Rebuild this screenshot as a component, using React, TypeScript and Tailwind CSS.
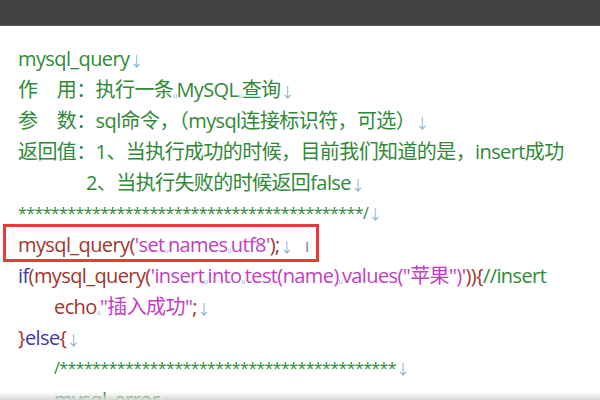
const G = "text-[#2f8a37]";
const R = "text-[#a3342c]";
const M = "text-[#c13ec4]";
const B = "text-[#3b3aa8]";
const Ar = () => <span className="text-[#8fb4dc] text-[14px] leading-none">↓</span>;
const Sp = () => <span className="text-[#8fb4dc] text-[10px] leading-none">ᵤ</span>;
const L = "h-[31px] leading-[31px] overflow-visible";

export default function App() {
  return (
    <div className="w-[600px] h-[400px] overflow-hidden bg-white relative" style={{ fontFamily: '"Open Sans","Noto Sans CJK SC",sans-serif' }}>
      <div className="h-[26px] bg-[#434343] border-b border-[#5a5a5a]" />
      <div className="pl-[18px] pt-[17px] text-[20px] tracking-[-0.6px] whitespace-nowrap">
        <div className={L + " " + G}>mysql_query<Ar /></div>
        <div className={L + " " + G}>作　用：执行一条<Sp />MySQL<Sp />查询<Ar /></div>
        <div className={L + " " + G}>参　数：sql命令，（mysql连接标识符，可选）<Ar /></div>
        <div className={L + " " + G}>返回值：1、当执行成功的时候，目前我们知道的是，insert成功</div>
        <div className={L + " " + G + " pl-[68px]"}>2、当执行失败的时候返回false<Ar /></div>
        <div className={L + " " + G + " text-[16px]"}>******************************************/<Ar /></div>
        <div className={L + " relative"}>
          <div className="absolute left-[-15px] top-[-5px] w-[316px] h-[38px] border-[3px] border-[#f0383a]" />
          <span className={R}>mysql_query(</span><span className={M}>'set<Sp />names<Sp />utf8'</span><span className={R}>);</span><Ar />
          <span className="text-[#777] ml-3 text-[15px]">I</span>
        </div>
        <div className={L}>
          <span className={B}>if</span><span className={R}>(mysql_query(</span><span className={M}>'insert<Sp />into<Sp />test(name)<Sp />values("苹果")'</span><span className={R}>)){"{"}</span><span className={G}>//insert</span>
        </div>
        <div className={L + " pl-[36px]"}><span className={R}>echo</span><Sp /><span className={M}>"插入成功"</span><span className={R}>;</span><Ar /></div>
        <div className={L}><span className={R}>{"}"}</span><span className={B}>else</span><span className={R}>{"{"}</span><Ar /></div>
        <div className={L + " " + G + " pl-[36px] text-[16px]"}>/*****************************************<Ar /></div>
        <div className={L + " " + G + " pl-[36px]"}>mysql_error<Ar /></div>
      </div>
      <div className="absolute bottom-0 left-0 w-full h-[8px] bg-gradient-to-b from-transparent to-[#d8d8d8]" />
    </div>
  );
}
